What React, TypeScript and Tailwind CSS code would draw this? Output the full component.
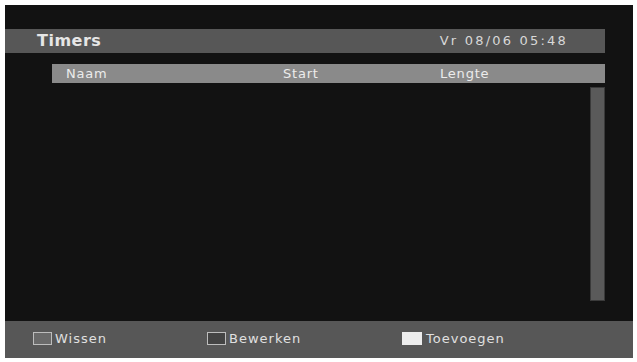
export default function App() {
  return (
    <div className="w-[637px] h-[362px] bg-white pt-[5px] pl-[5px] font-['DejaVu_Sans',sans-serif]">
      <div className="w-[628px] h-[353px] bg-[#121212] flex flex-col">
        {/* title bar */}
        <div className="mt-[24px] w-[600px] h-[24px] bg-[#575757] flex items-center justify-between pl-[32px] pr-[37px]">
          <span className="text-[16px] font-bold text-[#e6e6e6] tracking-[0.5px]">Timers</span>
          <span className="text-[13px] text-[#d8d8d8] tracking-[2.2px]">Vr 08/06 05:48</span>
        </div>

        {/* column header */}
        <div className="mt-[11px] ml-[47px] w-[553px] h-[19px] bg-[#8a8a8a] flex items-center text-[13px] text-[#ececec] tracking-[0.8px]">
          <span className="pl-[14px] w-[231px]">Naam</span>
          <span className="w-[157px]">Start</span>
          <span>Lengte</span>
        </div>

        {/* list area */}
        <div className="flex-1 flex pt-[4px]">
          <div className="flex-1" />
          <div className="mr-[28px] mb-[20px] w-[15px] bg-[#5a5a5a] border border-[#3a3a3a]" />
        </div>

        {/* footer */}
        <div className="h-[37px] bg-[#575757] flex items-center text-[13px] text-[#e0e0e0] tracking-[1px] pb-[2px]">
          <div className="flex items-center ml-[28px] w-[174px]">
            <span className="w-[19px] h-[13px] border border-[#bdbdbd] bg-[#6a6a6a] mr-[3px]" />
            <span>Wissen</span>
          </div>
          <div className="flex items-center w-[195px]">
            <span className="w-[19px] h-[13px] border border-[#bdbdbd] bg-[#444] mr-[3px]" />
            <span>Bewerken</span>
          </div>
          <div className="flex items-center">
            <span className="w-[20px] h-[13px] bg-[#ededed] mr-[4px]" />
            <span>Toevoegen</span>
          </div>
        </div>
      </div>
    </div>
  );
}
